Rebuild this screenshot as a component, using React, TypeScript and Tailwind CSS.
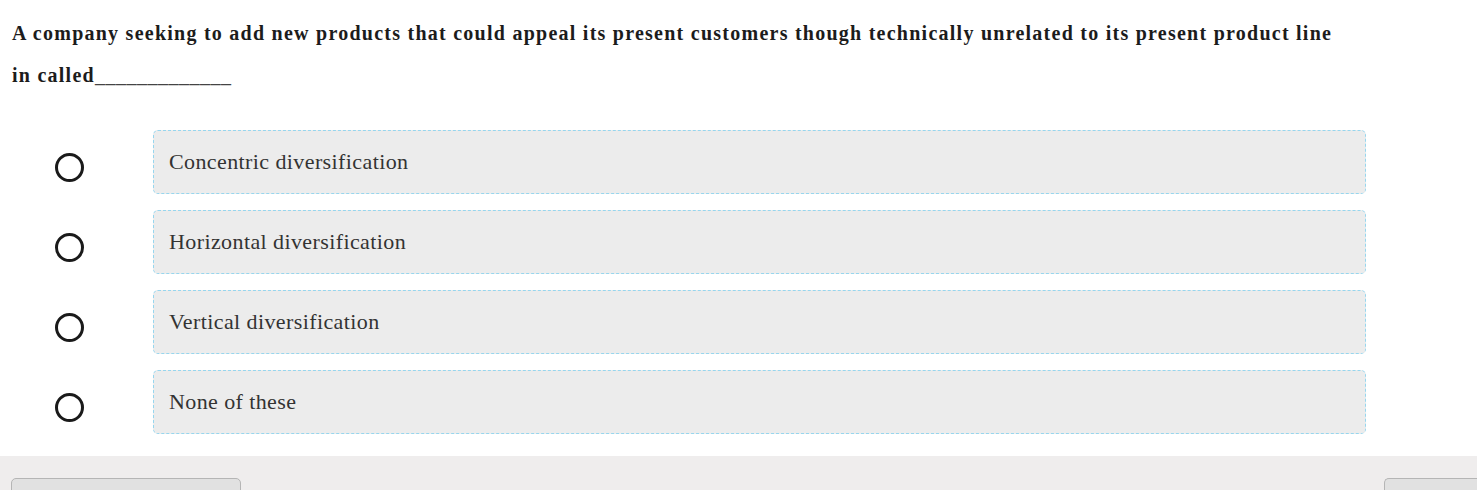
import React from "react";

const options = [
  "Concentric diversification",
  "Horizontal diversification",
  "Vertical diversification",
  "None of these",
];

export default function App() {
  return (
    <div className="w-[1477px] h-[490px] overflow-hidden bg-white flex flex-col" style={{ fontFamily: '"Liberation Serif", "Times New Roman", serif' }}>
      <div className="pl-[12px] pt-[12px] w-[1355px] text-[20px] leading-[42px] font-bold text-[#1c1c1c] tracking-[1.25px]">
        A company seeking to add new products that could appeal its present customers though technically unrelated to its present product line in called<span className="tracking-[0.5px] font-normal text-[#444]">_____________</span>
      </div>
      <div className="flex flex-col gap-[16px] mt-[34px]">
        {options.map((o) => (
          <div key={o} className="flex items-center">
            <div className="w-[153px] flex justify-center pr-[14px] pt-[10px]">
              <div className="w-[29px] h-[29px] rounded-full border-[3px] border-[#1a1a1a]" />
            </div>
            <div className="w-[1213px] h-[64px] bg-[#ececec] border border-dashed border-[#97d6ee] rounded-[5px] flex items-center pl-[15px] pb-[2px] text-[22px] tracking-[0.4px] text-[#333]">
              {o}
            </div>
          </div>
        ))}
      </div>
      <div className="mt-[22px] flex-1 bg-[#efeded] flex justify-between items-start pt-[22px] pl-[11px]">
        <div className="w-[230px] h-[40px] bg-[#e1e1e1] border border-[#b5b5b5] rounded-[5px]" />
        <div className="w-[93px] h-[40px] bg-[#e1e1e1] border border-r-0 border-[#b5b5b5] rounded-l-[5px]" />
      </div>
    </div>
  );
}
